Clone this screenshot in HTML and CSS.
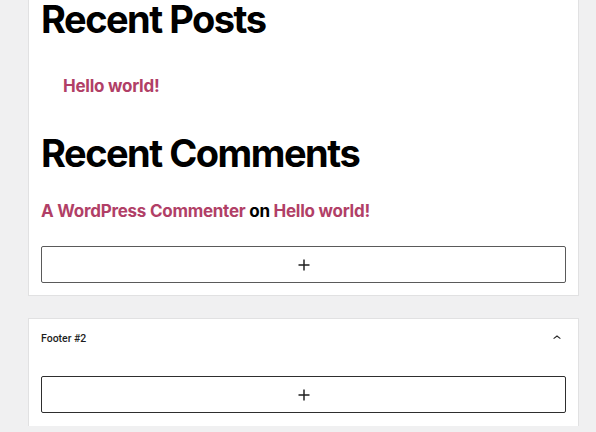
FILE: index.html
```html
<!DOCTYPE html>
<html>
<head>
<meta charset="utf-8">
<link rel="stylesheet" href="styles.css">
</head>
<body>
<div class="page">
  <section class="card card-main">
    <h2 class="widget-title">Recent Posts</h2>
    <ul class="post-list">
      <li><a href="#">Hello world!</a></li>
    </ul>
    <h2 class="widget-title title-comments">Recent Comments</h2>
    <p class="comment-line"><a href="#">A WordPress Commenter</a> on <a href="#">Hello world!</a></p>
    <button class="appender" type="button" aria-label="Add block">
      <svg viewBox="0 0 24 24" width="22" height="22"><path d="M18 11.2h-5.2V6h-1.6v5.2H6v1.6h5.2V18h1.6v-5.2H18z" fill="#1e1e1e"/></svg>
    </button>
  </section>
  <section class="card card-footer">
    <div class="panel-header">
      <span class="panel-title">Footer #2</span>
      <svg class="chevron" viewBox="0 0 24 24" width="16" height="16"><path d="M6.5 12.4L12 8l5.5 4.4-.9 1.2L12 10l-4.6 3.6-1-1.2z" fill="#1e1e1e"/></svg>
    </div>
    <button class="appender" type="button" aria-label="Add block">
      <svg viewBox="0 0 24 24" width="22" height="22"><path d="M18 11.2h-5.2V6h-1.6v5.2H6v1.6h5.2V18h1.6v-5.2H18z" fill="#1e1e1e"/></svg>
    </button>
  </section>
</div>
</body>
</html>
```
FILE: styles.css
```css
html, body {
  margin: 0;
  padding: 0;
  background: #f0f0f1;
}
body {
  font-family: Inter, "Liberation Sans", sans-serif;
  color: #000;
}
.page {
  width: 549px;
  margin-left: 29px;
  display: flex;
  flex-direction: column;
  gap: 24px;
}
.card {
  background: #fff;
  box-shadow: 0 0 0 1px rgba(0, 0, 0, 0.06);
  padding: 0 12px;
}
.card-main {
  padding-bottom: 12px;
}
.widget-title {
  margin: 0;
  font-size: 38px;
  line-height: 1;
  font-weight: 700;
  letter-spacing: -1.5px;
}
.title-comments {
  margin-top: 34px;
}
.post-list {
  list-style: none;
  margin: 35px 0 0;
  padding: 0 0 0 22px;
}
.post-list li,
.comment-line {
  font-size: 17px;
  line-height: 27px;
  font-weight: 700;
  letter-spacing: -0.25px;
}
.comment-line {
  margin: 26px 0 0;
}
a {
  color: #b13f67;
  text-decoration: none;
}
.appender {
  display: flex;
  align-items: center;
  justify-content: center;
  width: 100%;
  height: 37px;
  margin-top: 21px;
  padding: 0;
  background: #fff;
  border: 1px solid #5a5a5a;
  border-radius: 2px;
  cursor: pointer;
}
.card-footer {
  padding-bottom: 13px;
}
.card-footer .appender {
  margin-top: 19px;
  border-color: #2e2e2e;
}
.panel-header {
  height: 38px;
  display: flex;
  align-items: center;
  justify-content: space-between;
  padding-right: 1px;
}
.panel-title {
  font-family: Roboto, "Liberation Sans", sans-serif;
  font-size: 10.5px;
  font-weight: 500;
  color: #1e1e1e;
}
.chevron {
  display: block;
}
```
